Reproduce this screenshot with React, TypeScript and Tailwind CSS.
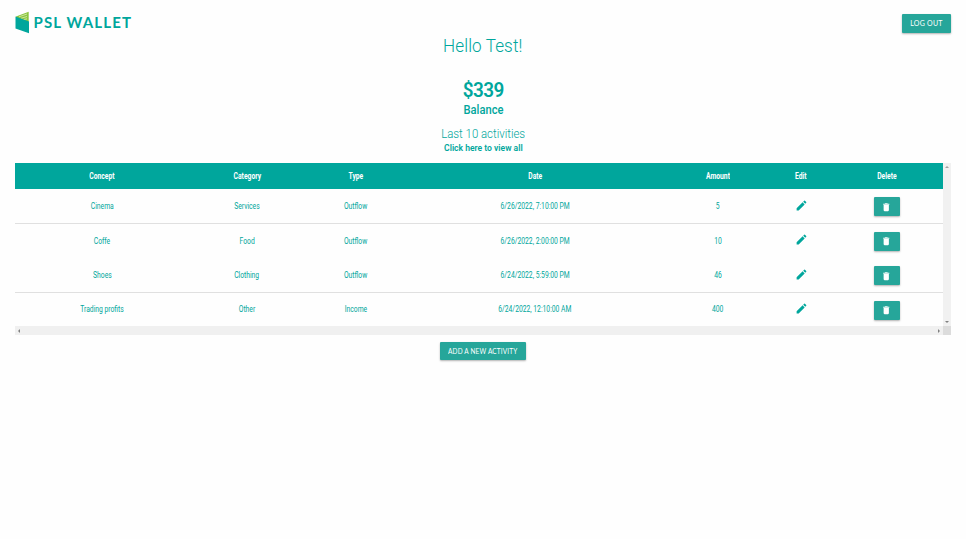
import { MdDelete, MdEdit } from "react-icons/md";

const columns = ["Concept", "Category", "Type", "Date", "Amount", "Edit", "Delete"];

const activities = [
  { concept: "Cinema", category: "Services", type: "Outflow", date: "6/26/2022, 7:10:00 PM", amount: "5", line: true },
  { concept: "Coffe", category: "Food", type: "Outflow", date: "6/26/2022, 2:00:00 PM", amount: "10", line: false },
  { concept: "Shoes", category: "Clothing", type: "Outflow", date: "6/24/2022, 5:59:00 PM", amount: "46", line: true },
  { concept: "Trading profits", category: "Other", type: "Income", date: "6/24/2022, 12:10:00 AM", amount: "400", line: false },
];

const grid = "grid grid-cols-[174px_116px_101px_258px_108px_58px_113px] items-center justify-items-center";
const shadow = "shadow-[0_1px_2px_rgba(0,0,0,0.3)]";

function Logo() {
  return (
    <svg width="118" height="24" viewBox="0 0 118 24" role="img" aria-label="PSL Wallet">
      <path d="M1 5.500 13.700 0.700v10.500L1 6.500z" fill="#8cc63f" />
      <path d="M4 5.800 12 3M6 7.300l6-1.800M8.500 8.600l3.500-.8" stroke="#e6f4c8" strokeWidth="0.7" />
      <path d="M0.500 5.500 14 10.500v11.700L0.500 17.500z" fill="#00a69c" />
      <text x="18.500" y="16.700" textLength="97.500" lengthAdjust="spacing" fill="#00a69c" fontSize="15" fontWeight="700" fontFamily="Lato, sans-serif">
        PSL WALLET
      </text>
    </svg>
  );
}

function Cell({ children }: { children: string }) {
  return <span className="inline-block scale-x-[0.75] whitespace-nowrap">{children}</span>;
}

export default function App() {
  return (
    <div className="h-[539px] overflow-hidden bg-[#fefefe] px-[15px] font-['Roboto',sans-serif] text-[#00a69c]">
      <header className="flex h-[36px] items-start justify-between">
        <div className="pt-[11px]">
          <Logo />
        </div>
        <button className={`mt-[14px] h-[19px] w-[49px] shrink-0 rounded-[1px] bg-[#26a69a] font-['Lato',sans-serif] text-[7px] leading-[19px] tracking-[0.25px] whitespace-nowrap text-white ${shadow}`}>
          LOG OUT
        </button>
      </header>

      <section className="flex flex-col items-center">
        <h1 className="h-[42px] scale-x-95 text-[18px] leading-[19px] font-light tracking-[0.1px]">Hello Test!</h1>
        <p className="h-[25px] scale-x-[0.97] text-[19.500px] leading-[25px] font-semibold tracking-[-0.5px]">$339</p>
        <p className="h-[24px] scale-x-[0.93] text-[12px] leading-[15px] font-medium">Balance</p>
        <p className="h-[14px] scale-x-95 text-[12px] leading-[15px] font-light">Last 10 activities</p>
        <a className="h-[22px] scale-x-95 text-[9px] leading-[14px] font-semibold">Click here to view all</a>
      </section>

      <div className="grid w-[936px] grid-cols-[928px_8px] grid-rows-[163px_9px]">
        <div className="text-[9px]">
          <div className={`${grid} h-[26px] bg-[#00a69c] pt-px font-bold text-white`}>
            {columns.map((name) => (
              <Cell key={name}>{name}</Cell>
            ))}
          </div>
          <div className="pt-[0.800px]">
            {activities.map((item) => (
              <div key={item.date} className={`${grid} h-[34.400px] border-b pt-px ${item.line ? "border-[#e0e0e0]" : "border-transparent"}`}>
                <Cell>{item.concept}</Cell>
                <Cell>{item.category}</Cell>
                <Cell>{item.type}</Cell>
                <Cell>{item.date}</Cell>
                <Cell>{item.amount}</Cell>
                <MdEdit size={13} className="mb-[3px]" />
                <button className={`flex h-[19px] w-[26px] items-center justify-center rounded-[1px] bg-[#26a69a] text-white ${shadow}`}>
                  <MdDelete size={10.5} />
                </button>
              </div>
            ))}
          </div>
        </div>
        <div className="flex flex-col items-center justify-between bg-[#f1f1f1] py-[3px]">
          <i className="border-x-2 border-b-2 border-x-transparent border-b-[#a0a0a0]" />
          <i className="border-x-2 border-t-2 border-x-transparent border-t-[#808080]" />
        </div>
        <div className="z-10 flex items-center justify-between bg-[#f0f0f0] px-[3px]">
          <i className="border-y-2 border-r-2 border-y-transparent border-r-[#808080]" />
          <i className="border-y-2 border-l-2 border-y-transparent border-l-[#808080]" />
        </div>
        <div className="bg-[#dcdcdc]" />
      </div>

      <div className="flex justify-center pt-[7px]">
        <button className={`flex h-[18px] w-[86px] items-center justify-center rounded-[1px] bg-[#26a69a] font-['Lato',sans-serif] text-[7px] leading-[18px] tracking-[0.2px] whitespace-nowrap text-white ${shadow}`}>
          <span className="scale-x-[0.92]">ADD A NEW ACTIVITY</span>
        </button>
      </div>
    </div>
  );
}
